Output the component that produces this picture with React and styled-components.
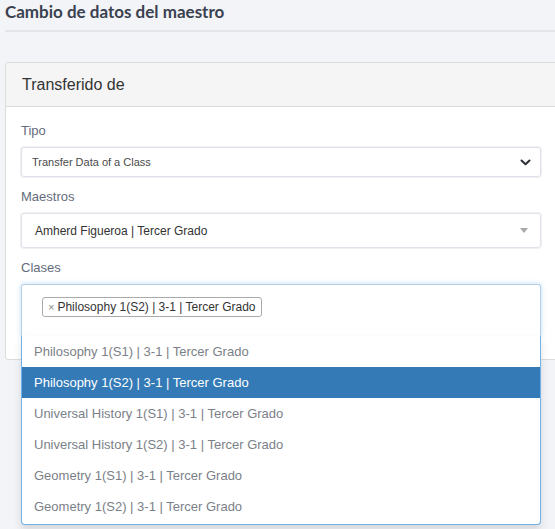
import styled, { createGlobalStyle } from "styled-components";

const GlobalStyle = createGlobalStyle`
  html, body {
    margin: 0;
    padding: 0;
    background: #f3f4f7;
    font-family: "Liberation Sans", Arial, sans-serif;
    overflow: hidden;
  }
  * { box-sizing: border-box; }
`;

const options = [
  "Philosophy 1(S1) | 3-1 | Tercer Grado",
  "Philosophy 1(S2) | 3-1 | Tercer Grado",
  "Universal History 1(S1) | 3-1 | Tercer Grado",
  "Universal History 1(S2) | 3-1 | Tercer Grado",
  "Geometry 1(S1) | 3-1 | Tercer Grado",
  "Geometry 1(S2) | 3-1 | Tercer Grado",
];

const ChevronDown = () => (
  <svg width="11" height="7" viewBox="0 0 11 7">
    <polyline
      points="1.5,1.5 5.5,5.3 9.5,1.5"
      fill="none"
      stroke="#2b2f36"
      strokeWidth="2"
      strokeLinecap="round"
      strokeLinejoin="round"
    />
  </svg>
);

const App = () => {
  const selected = 1;

  return (
    <Page>
      <GlobalStyle />
      <Title>Cambio de datos del maestro</Title>

      <Card>
        <CardHeader>Transferido de</CardHeader>
        <CardBody>
          <Field>
            <Label>Tipo</Label>
            <NativeSelect>
              <SmallText>Transfer Data of a Class</SmallText>
              <ChevronDown />
            </NativeSelect>
          </Field>

          <Field>
            <Label>Maestros</Label>
            <Select2Box>
              <Value>Amherd Figueroa | Tercer Grado</Value>
              <Caret />
            </Select2Box>
          </Field>

          <Field>
            <Label>Clases</Label>
            <MultiWrap>
              <MultiBox>
                <Tag>
                  <TagRemove>×</TagRemove>
                  Philosophy 1(S2) | 3-1 | Tercer Grado
                </Tag>
              </MultiBox>
              <Dropdown>
                {options.map((opt, i) => (
                  <Option key={opt} active={i === selected}>
                    {opt}
                  </Option>
                ))}
              </Dropdown>
            </MultiWrap>
          </Field>
        </CardBody>
      </Card>
    </Page>
  );
};

const Page = styled.div`
  width: 555px;
  height: 529px;
  padding-left: 5px;
  display: flex;
  flex-direction: column;
`;

const Title = styled.h1`
  margin: 0;
  height: 32px;
  padding-top: 1px;
  font-family: Lato, "Liberation Sans", sans-serif;
  font-size: 17px;
  font-weight: 700;
  color: #3a4150;
  line-height: 22px;
  border-bottom: 2px solid #e3e5ea;
`;

const Card = styled.section`
  margin-top: 30px;
  margin-right: -3px;
  background: #fff;
  border: 1px solid #dcdcdc;
  border-radius: 3px;
`;

const CardHeader = styled.div`
  height: 44px;
  padding: 0 16px;
  display: flex;
  align-items: center;
  background: #f5f5f5;
  border-bottom: 1px solid #dcdcdc;
  border-radius: 3px 3px 0 0;
  font-size: 16px;
  color: #333;
`;

const CardBody = styled.div`
  padding: 15px 16px 22px 15px;
  display: flex;
  flex-direction: column;
  gap: 11px;
`;

const Field = styled.div`
  display: flex;
  flex-direction: column;
`;

const Label = styled.label`
  font-size: 13px;
  line-height: 18px;
  color: #646c7c;
  margin-bottom: 7px;
`;

const NativeSelect = styled.div`
  height: 30px;
  border: 1px solid #dfe2e8;
  border-radius: 3px;
  box-shadow: 0 0 0 1px #eef0f3;
  padding: 0 9px 0 10px;
  display: flex;
  align-items: center;
  justify-content: space-between;
`;

const SmallText = styled.span`
  font-size: 11px;
  color: #4a4a4a;
`;

const Select2Box = styled.div`
  height: 35px;
  border: 1px solid #dfe2e8;
  border-radius: 3px;
  box-shadow: 0 0 0 1px #eef0f3;
  padding: 0 12px 0 13px;
  display: flex;
  align-items: center;
  justify-content: space-between;
`;

const Value = styled.span`
  font-size: 12px;
  color: #333;
`;

const Caret = styled.span`
  width: 0;
  height: 0;
  border-left: 4px solid transparent;
  border-right: 4px solid transparent;
  border-top: 5px solid #aaa;
`;

const MultiWrap = styled.div`
  position: relative;
`;

const MultiBox = styled.div`
  height: 53px;
  border: 1px solid #b9cfe8;
  border-bottom-color: #dfe4ea;
  border-radius: 3px 3px 0 0;
  box-shadow: 0 0 5px rgba(102, 175, 233, 0.45);
  padding: 12px 20px;
  display: flex;
  align-items: flex-start;
`;

const Tag = styled.span`
  display: inline-flex;
  align-items: center;
  height: 20px;
  padding: 0 5px;
  border: 1px solid #aaa;
  border-radius: 3px;
  background: #fff;
  font-size: 12px;
  color: #333;
`;

const TagRemove = styled.span`
  color: #888;
  font-size: 11px;
  margin-right: 3px;
`;

const Dropdown = styled.ul`
  position: absolute;
  left: 0;
  right: 0;
  top: 52px;
  margin: 0;
  padding: 0 0 2px;
  list-style: none;
  background: #fff;
  border: 1px solid #6fb1ea;
  border-top: none;
  border-radius: 0 0 4px 4px;
  box-shadow: 0 5px 8px rgba(0, 0, 0, 0.12);
`;

const Option = styled.li`
  height: 31px;
  padding: 0 12px;
  display: flex;
  align-items: center;
  font-size: 13px;
  color: ${({ active }) => (active ? "#fff" : "#7b7f88")};
  background: ${({ active }) => (active ? "#337ab7" : "transparent")};
`;

export default App;
